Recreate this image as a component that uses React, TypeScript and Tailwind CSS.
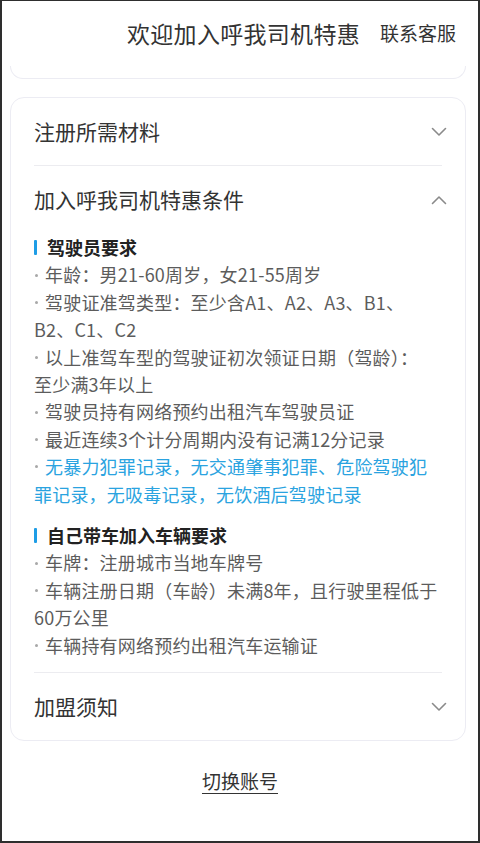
import React from "react";

const FONT = { fontFamily: '"Noto Sans CJK SC", "Noto Sans", sans-serif' };

function Chevron({ up = false }: { up?: boolean }) {
  return (
    <svg width="16" height="10" viewBox="0 0 16 10" fill="none" className="shrink-0">
      {up ? (
        <polyline points="1.5,8.5 8,2 14.5,8.5" stroke="#8a8a8a" strokeWidth="1.6" strokeLinecap="round" strokeLinejoin="round" />
      ) : (
        <polyline points="1.5,1.5 8,8 14.5,1.5" stroke="#8a8a8a" strokeWidth="1.6" strokeLinecap="round" strokeLinejoin="round" />
      )}
    </svg>
  );
}

function SubTitle({ children }: { children: React.ReactNode }) {
  return (
    <div className="flex items-center h-[27.4px]">
      <span className="w-[3px] h-[15px] rounded-[1px] bg-[#1e9de6] mr-[10px]" />
      <span className="text-[18px] font-bold text-[#222] leading-[27.4px]">{children}</span>
    </div>
  );
}

function Item({ lines, blue = false }: { lines: string[]; blue?: boolean }) {
  return (
    <div className={`text-[18px] leading-[27.4px] whitespace-nowrap tracking-[0.2px] ${blue ? "text-[#2aa3e0]" : "text-[#5c5c5c]"}`}>
      {lines.map((l, i) => (
        <div key={i} className="flex items-center">
          {i === 0 && <span className="inline-block w-[3px] h-[3px] rounded-full bg-[#a8a8a8] ml-[1px] mr-[7px] shrink-0" />}
          <span>{l}</span>
        </div>
      ))}
    </div>
  );
}

export default function App() {
  return (
    <div
      style={FONT}
      className="w-[480px] h-[843px] bg-white border-x-2 border-b-2 border-t border-[#2e2e2e] overflow-hidden flex flex-col"
    >
      <div className="h-[65px] flex items-center justify-end pr-[22px] gap-[20px] shrink-0">
        <span className="text-[23px] text-[#333] tracking-[0.3px]">欢迎加入呼我司机特惠</span>
        <span className="text-[19px] text-[#333]">联系客服</span>
      </div>

      <div className="ml-[8px] mr-[12px] h-[13px] rounded-b-[14px] border border-t-0 border-[#ececf3] shrink-0" />

      <div className="ml-[8px] mr-[12px] mt-[18px] rounded-[14px] border border-[#ececf3] pl-[23px] pr-[18px] shrink-0">
        <div className="h-[67px] flex items-center justify-between">
          <span className="text-[21px] text-[#333]">注册所需材料</span>
          <Chevron />
        </div>
        <div className="h-px bg-[#ececf0] mr-[5px]" />
        <div className="h-[68px] flex items-center justify-between">
          <span className="text-[21px] text-[#333]">加入呼我司机特惠条件</span>
          <Chevron up />
        </div>
        <div>
          <SubTitle>驾驶员要求</SubTitle>
          <Item lines={["年龄：男21-60周岁，女21-55周岁"]} />
          <Item lines={["驾驶证准驾类型：至少含A1、A2、A3、B1、", "B2、C1、C2"]} />
          <Item lines={["以上准驾车型的驾驶证初次领证日期（驾龄）：", "至少满3年以上"]} />
          <Item lines={["驾驶员持有网络预约出租汽车驾驶员证"]} />
          <Item lines={["最近连续3个计分周期内没有记满12分记录"]} />
          <Item blue lines={["无暴力犯罪记录，无交通肇事犯罪、危险驾驶犯", "罪记录，无吸毒记录，无饮酒后驾驶记录"]} />
          <div className="h-[14px]" />
          <SubTitle>自己带车加入车辆要求</SubTitle>
          <Item lines={["车牌：注册城市当地车牌号"]} />
          <Item lines={["车辆注册日期（车龄）未满8年，且行驶里程低于", "60万公里"]} />
          <Item lines={["车辆持有网络预约出租汽车运输证"]} />
        </div>
        <div className="h-[13px]" />
        <div className="h-px bg-[#ececf0] mr-[5px]" />
        <div className="h-[67px] flex items-center justify-between">
          <span className="text-[21px] text-[#333]">加盟须知</span>
          <Chevron />
        </div>
      </div>

      <div className="flex justify-center mt-[26px]">
        <span className="text-[19px] text-[#333] underline underline-offset-[4px]">切换账号</span>
      </div>
    </div>
  );
}
